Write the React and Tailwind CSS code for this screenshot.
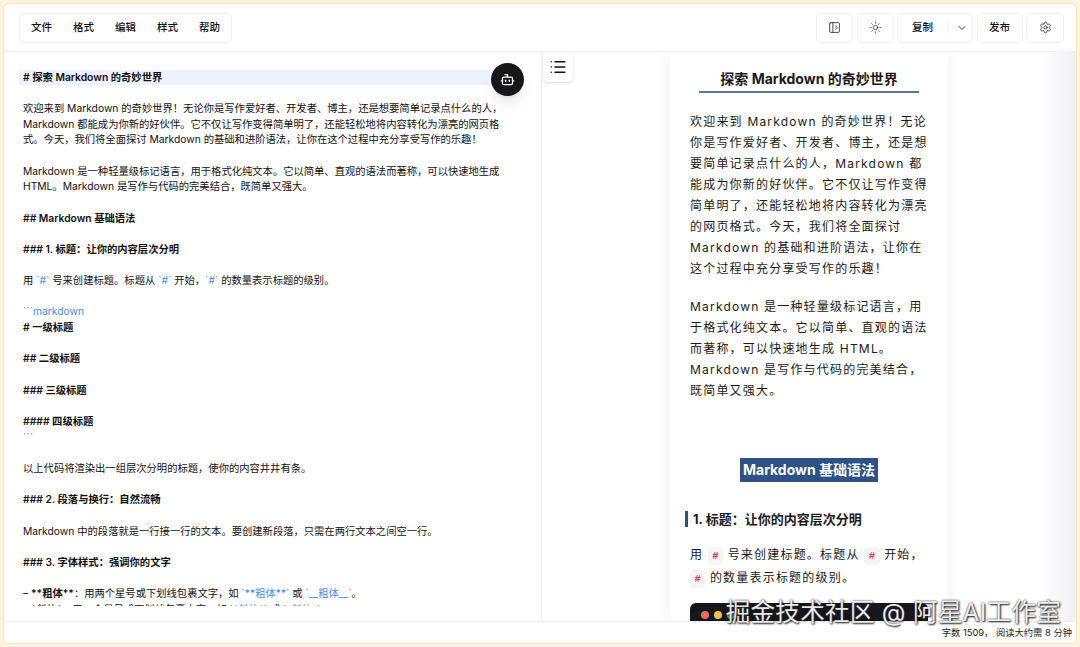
import React from 'react';
import { Bot, ChevronDown, List, PanelLeftOpen, Settings, Sun } from 'lucide-react';

const menus = ['文件', '格式', '编辑', '样式', '帮助'];

const Tick = ({ children }) => <span className="text-[#4a8bf0]">{children}</span>;
const B = ({ children }) => <p className="font-semibold text-[#111]">{children}</p>;
const Gap = () => <p className="h-[15.67px]" />;
const Code = () => (
  <code className="rounded-[4px] bg-[#f5f5f5] px-[4.5px] py-[3px] text-[10.5px] font-semibold tracking-normal text-[#d6336c]">#</code>
);

const IconButton = ({ children, width = 'w-[37px]' }) => (
  <button className={`flex h-[30px] ${width} items-center justify-center rounded-[5px] border border-[#f0f0f2] bg-white text-[#222]`}>
    {children}
  </button>
);

const Toolbar = () => (
  <header className="flex h-[48px] shrink-0 items-center justify-between border-b border-[#f0f0f2] pl-[15px] pr-[12px]">
    <nav className="flex h-[30px] items-center gap-[21px] rounded-[5px] border border-[#eeeef0] px-[11px] text-[10.5px] font-medium text-[#111]">
      {menus.map((menu) => (
        <span key={menu}>{menu}</span>
      ))}
    </nav>
    <div className="flex items-center gap-[3.5px] text-[10.5px] font-medium text-[#111]">
      <IconButton>
        <PanelLeftOpen size={13} strokeWidth={1.5} />
      </IconButton>
      <IconButton>
        <Sun size={13} strokeWidth={1.3} />
      </IconButton>
      <div className="flex h-[30px] w-[76px] items-center rounded-[5px] border border-[#f0f0f2]">
        <span className="w-[50px] border-r border-[#f4f4f5] text-center">复制</span>
        <ChevronDown size={12} strokeWidth={1.8} className="ml-[8px]" />
      </div>
      <button className="h-[30px] w-[46px] rounded-[5px] border border-[#f0f0f2]">发布</button>
      <IconButton width="w-[38px]">
        <Settings size={13} strokeWidth={1.5} />
      </IconButton>
    </div>
  </header>
);

const Editor = () => (
  <section className="relative flex w-[538px] shrink-0 flex-col border-r border-[#eeeef0] pb-[15px] pl-[15px] pt-[17.5px] text-[10.3px] leading-[15.67px] text-[#111]">
    <div className="min-h-0 flex-1 overflow-hidden">
      <p className="w-[494px] bg-[#eef2fd] pl-[4px] font-semibold text-[#111]"># 探索 Markdown 的奇妙世界</p>
      <div className="w-[486px] pl-[4px]">
        <Gap />
        <p>欢迎来到 Markdown 的奇妙世界！无论你是写作爱好者、开发者、博主，还是想要简单记录点什么的人，Markdown 都能成为你新的好伙伴。它不仅让写作变得简单明了，还能轻松地将内容转化为漂亮的网页格式。今天，我们将全面探讨 Markdown 的基础和进阶语法，让你在这个过程中充分享受写作的乐趣！</p>
        <Gap />
        <p>Markdown 是一种轻量级标记语言，用于格式化纯文本。它以简单、直观的语法而著称，可以快速地生成 HTML。Markdown 是写作与代码的完美结合，既简单又强大。</p>
        <Gap />
        <B>## Markdown 基础语法</B>
        <Gap />
        <B>### 1. 标题：让你的内容层次分明</B>
        <Gap />
        <p>用 <Tick>`#`</Tick> 号来创建标题。标题从 <Tick>`#`</Tick> 开始，<Tick>`#`</Tick> 的数量表示标题的级别。</p>
        <Gap />
        <p><Tick>```markdown</Tick></p>
        <B># 一级标题</B>
        <Gap />
        <B>## 二级标题</B>
        <Gap />
        <B>### 三级标题</B>
        <Gap />
        <B>#### 四级标题</B>
        <p><Tick>```</Tick></p>
        <Gap />
        <p>以上代码将渲染出一组层次分明的标题，使你的内容井井有条。</p>
        <Gap />
        <B>### 2. 段落与换行：自然流畅</B>
        <Gap />
        <p>Markdown 中的段落就是一行接一行的文本。要创建新段落，只需在两行文本之间空一行。</p>
        <Gap />
        <B>### 3. 字体样式：强调你的文字</B>
        <Gap />
        <p>– <b className="font-semibold">**粗体**</b>：用两个星号或下划线包裹文字，如 <Tick>`**粗体**`</Tick> 或 <Tick>`__粗体__`</Tick>。</p>
        <p>– *斜体*：用一个星号或下划线包裹文字，如 <Tick>`*斜体*`</Tick> 或 <Tick>`_斜体_`</Tick>。</p>
      </div>
    </div>
    <button className="absolute left-[487px] top-[11px] flex h-[33px] w-[33px] items-center justify-center rounded-full bg-[#17171a] text-white shadow-lg">
      <Bot size={15} strokeWidth={2} />
    </button>
  </section>
);

const Preview = () => (
  <section className="relative flex min-w-0 flex-1 justify-end overflow-hidden bg-gradient-to-r from-white from-[93%] to-[#f0f0f4]">
    <button className="absolute left-[1px] top-[0px] flex h-[30px] w-[30px] items-center justify-center rounded-b-[5px] bg-white text-[#111] shadow-[0_1px_3px_rgba(0,0,0,0.15)]">
      <List size={18} strokeWidth={2} />
    </button>
    <article className="mr-[128px] w-[278px] shrink-0 bg-white px-[20px] pt-[16px] text-[12px] leading-[21px] tracking-[1.2px] text-[#1a1a1a] shadow-[0_0_16px_rgba(0,0,0,0.07)]">
      <h1 className="mx-[9px] border-b-2 border-[#5a7796] pb-[1px] text-center text-[14px] font-bold leading-[22px] tracking-normal text-[#1a1a1a]">探索 Markdown 的奇妙世界</h1>
      <p className="mt-[18px]">欢迎来到 Markdown 的奇妙世界！无论你是写作爱好者、开发者、博主，还是想要简单记录点什么的人，Markdown 都能成为你新的好伙伴。它不仅让写作变得简单明了，还能轻松地将内容转化为漂亮的网页格式。今天，我们将全面探讨 Markdown 的基础和进阶语法，让你在这个过程中充分享受写作的乐趣！</p>
      <p className="mt-[17px]">Markdown 是一种轻量级标记语言，用于格式化纯文本。它以简单、直观的语法而著称，可以快速地生成 HTML。Markdown 是写作与代码的完美结合，既简单又强大。</p>
      <div className="mt-[57px] flex justify-center">
        <h2 className="bg-[#2c5286] px-[3px] text-[14px] font-bold leading-[24px] tracking-normal text-white">Markdown 基础语法</h2>
      </div>
      <h3 className="-ml-[5px] mt-[29px] border-l-[3px] border-[#2c5286] pl-[5px] text-[13px] font-bold leading-[16px] tracking-normal text-[#1a1a1a]">1. 标题：让你的内容层次分明</h3>
      <p className="mt-[17px]">用 <Code /> 号来创建标题。标题从 <Code /> 开始，<Code /> 的数量表示标题的级别。</p>
      <div className="mt-[13px] flex h-[30px] items-start gap-[5px] rounded-t-[6px] bg-[#15171b] px-[11px] pt-[8px]">
        <i className="h-[8px] w-[8px] rounded-full bg-[#ec6a5e]" />
        <i className="h-[8px] w-[8px] rounded-full bg-[#f4bf4f]" />
        <i className="h-[8px] w-[8px] rounded-full bg-[#61c554]" />
      </div>
    </article>
  </section>
);

const App = () => (
  <div className="h-[647px] w-[1080px] overflow-hidden bg-[#fdf3df] p-[3px] font-['Inter','Noto_Sans_CJK_SC',sans-serif]">
    <div className="relative flex h-full flex-col overflow-hidden rounded-[6px] border border-[#fbe6c2] bg-white">
      <Toolbar />
      <main className="flex min-h-0 flex-1">
        <Editor />
        <Preview />
      </main>
      <footer className="z-10 flex h-[22px] shrink-0 items-center justify-end border-t border-[#f0f0f2] bg-white pr-[4px] text-[9.3px] text-[#222]">
        字数 1509， 阅读大约需 8 分钟
      </footer>
      <div className="absolute right-[15px] top-[594px] z-20 text-[24.5px] leading-[28px] tracking-[0.3px] text-white/90 [text-shadow:0_0_2px_#222,1px_1px_2px_#222]">
        掘金技术社区 @ 阿星AI工作室
      </div>
    </div>
  </div>
);

export default App;
